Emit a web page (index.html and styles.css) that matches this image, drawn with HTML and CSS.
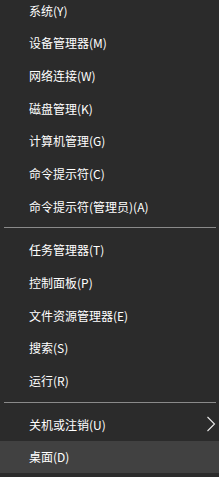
FILE: index.html
```html
<!DOCTYPE html>
<html lang="zh-CN">
<head>
<meta charset="utf-8">
<link rel="stylesheet" href="styles.css">
</head>
<body>
<div class="menu">
  <div class="list">
    <div class="item">系统(Y)</div>
    <div class="item">设备管理器(M)</div>
    <div class="item">网络连接(W)</div>
    <div class="item">磁盘管理(K)</div>
    <div class="item">计算机管理(G)</div>
    <div class="item">命令提示符(C)</div>
    <div class="item">命令提示符(管理员)(A)</div>
    <div class="sep"></div>
    <div class="item">任务管理器(T)</div>
    <div class="item">控制面板(P)</div>
    <div class="item">文件资源管理器(E)</div>
    <div class="item">搜索(S)</div>
    <div class="item">运行(R)</div>
    <div class="sep"></div>
    <div class="item has-sub">关机或注销(U)
      <svg class="chev" width="10" height="16" viewBox="0 0 10 16"><polyline points="1.5,1 8.5,8 1.5,15" fill="none" stroke="#e8e8e8" stroke-width="1.1"/></svg>
    </div>
    <div class="item active">桌面(D)</div>
  </div>
</div>
</body>
</html>
```
FILE: styles.css
```css
html, body {
  margin: 0;
  padding: 0;
  background: #2b2b2b;
}
.menu {
  width: 219px;
  height: 477px;
  overflow: hidden;
  background: #2b2b2b;
  font-family: "Noto Sans CJK SC", "Noto Sans", sans-serif;
  font-size: 12px;
  color: #ffffff;
}
.list {
  margin-top: -6.35px;
  display: flex;
  flex-direction: column;
}
.item {
  height: 32.7px;
  display: flex;
  align-items: center;
  justify-content: space-between;
  padding-left: 29px;
  padding-right: 3px;
  box-sizing: border-box;
  white-space: nowrap;
}
.item.active {
  background: #414141;
}
.sep {
  height: 1px;
  margin: 5px 3px 5px 4px;
  background: #8a8a8a;
}
.chev {
  display: block;
  margin-right: 0;
}
```
